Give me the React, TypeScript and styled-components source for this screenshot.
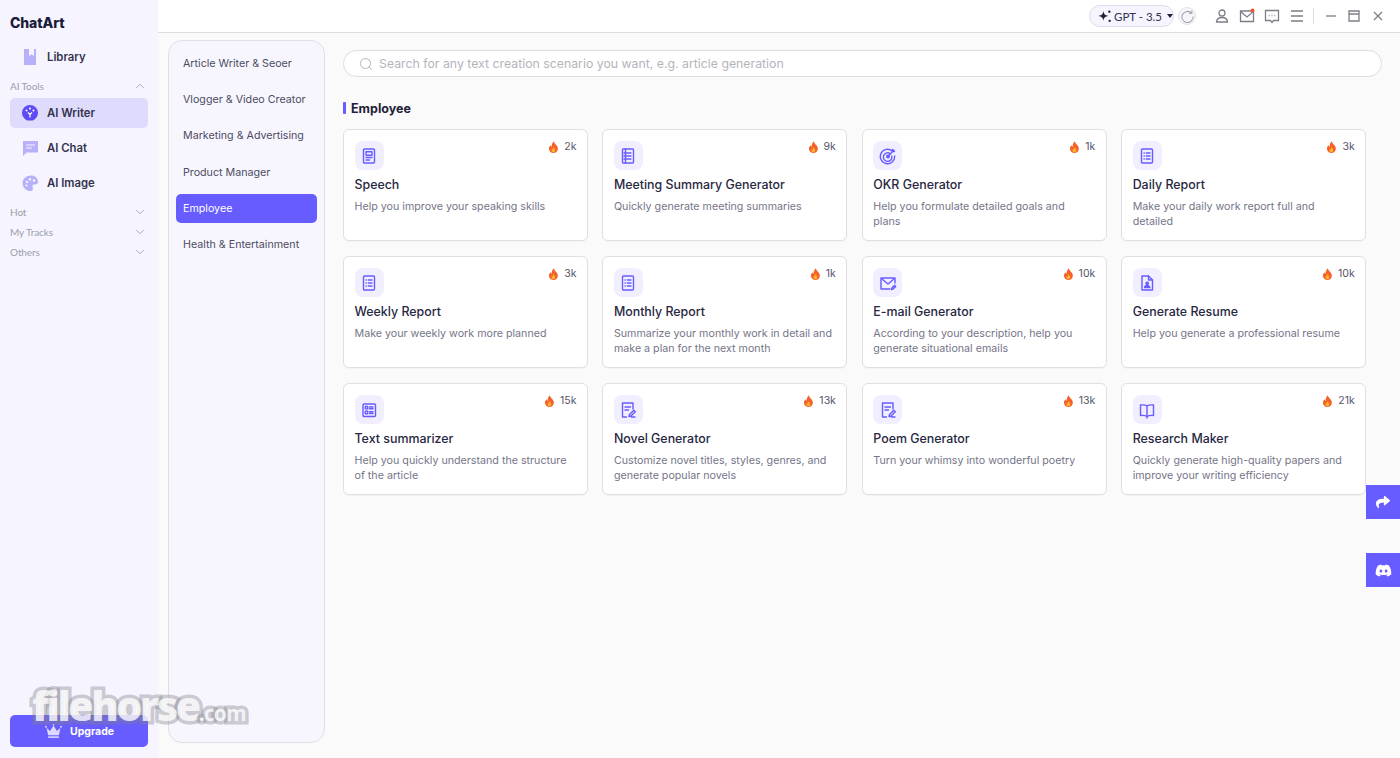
import React from "react";
import styled, { createGlobalStyle } from "styled-components";
import { FaDiscord, FaShare } from "react-icons/fa";
import { ChevronDown, ChevronUp } from "lucide-react";

const GlobalStyle = createGlobalStyle`
  html, body {
    margin: 0;
    padding: 0;
    height: 100%;
    overflow: hidden;
    font-family: Inter, "Open Sans", sans-serif;
    background: #fafafa;
  }
  * { box-sizing: border-box; }
`;

const Page = styled.div`
  position: relative;
  display: flex;
  width: 1400px;
  height: 758px;
  overflow: hidden;
`;

const Sidebar = styled.aside`
  flex: 0 0 158px;
  display: flex;
  flex-direction: column;
  padding: 14px 10px 11px;
  background: #f6f5ff;
`;

const Logo = styled.div`
  height: 17px;
  font-size: 14px;
  line-height: 17px;
  font-weight: 800;
  letter-spacing: -0.1px;
  color: #1b1b3a;
  margin-bottom: 11px;
`;

const NavRow = styled.div<{ $active?: boolean; $gap?: number }>`
  display: flex;
  align-items: center;
  gap: 8px;
  height: 30px;
  margin-bottom: ${(p) => p.$gap ?? 4}px;
  padding-left: 11px;
  border-radius: 5px;
  background: ${(p) => (p.$active ? "#dfdbfd" : "transparent")};
  font-size: 11.3px;
  font-weight: 600;
  color: #33334f;
`;

const NavIcon = styled.svg`
  width: 18px;
  height: 18px;
  flex: none;
`;

const GroupRow = styled.div<{ $gap?: number }>`
  display: flex;
  align-items: center;
  justify-content: space-between;
  height: 20px;
  padding-right: 1px;
  margin-bottom: ${(p) => p.$gap ?? 0}px;
  font-family: Lato, sans-serif;
  font-size: 10px;
  letter-spacing: -0.1px;
  color: #9d9da8;
`;

const Spacer = styled.div`
  flex: 1;
`;

const UpgradeButton = styled.div`
  display: flex;
  align-items: center;
  justify-content: center;
  gap: 7px;
  height: 32px;
  border-radius: 5px;
  background: #675cff;
  color: #fff;
  font-size: 10.5px;
  font-weight: 700;
`;

const Main = styled.div`
  flex: 1;
  display: flex;
  flex-direction: column;
  min-width: 0;
`;

const TitleBar = styled.header`
  flex: 0 0 33px;
  display: flex;
  align-items: center;
  background: #fff;
  border-bottom: 1px solid #dedee0;
  padding-left: 931px;
`;

const ModelPill = styled.div`
  display: flex;
  align-items: center;
  gap: 2px;
  width: 85px;
  height: 22px;
  padding-left: 8px;
  border: 1px solid #dddde8;
  border-radius: 11px;
  background: #f6f5ff;
  font-family: Lato, sans-serif;
  font-size: 11.5px;
  color: #33334f;
  white-space: nowrap;
`;

const Caret = styled.span`
  width: 0;
  height: 0;
  margin-left: 3px;
  border-left: 3.5px solid transparent;
  border-right: 3.5px solid transparent;
  border-top: 4px solid #22223a;
`;

const RefreshButton = styled.div`
  display: flex;
  align-items: center;
  justify-content: center;
  width: 18px;
  height: 18px;
  margin: 0 18px 0 4px;
  border: 1px solid #e2e2ea;
  border-radius: 50%;
  background: #f6f6fa;
`;

const BarIcon = styled.svg<{ $gap?: number }>`
  width: 16px;
  height: 16px;
  flex: none;
  margin-right: ${(p) => p.$gap ?? 9}px;
  fill: none;
  stroke: #7d7d88;
  stroke-width: 1.3;
`;

const BarDivider = styled.span`
  width: 1px;
  height: 16px;
  background: #dcdce0;
  margin-right: 9px;
`;

const Content = styled.div`
  flex: 1;
  display: flex;
  min-height: 0;
  padding: 7px 0 15px 10px;
`;

const CategoryPanel = styled.nav`
  flex: 0 0 157px;
  padding: 7px 7px;
  border: 1px solid #dfdfe8;
  border-radius: 14px;
  background: #f7f6ff;
`;

const CategoryItem = styled.div<{ $active?: boolean }>`
  display: flex;
  align-items: center;
  height: 29px;
  margin-bottom: 7.4px;
  padding: 1px 0 0 7px;
  border-radius: 5px;
  background: ${(p) => (p.$active ? "#675cff" : "transparent")};
  color: ${(p) => (p.$active ? "#fff" : "#4c4c60")};
  font-size: 10.7px;
  white-space: nowrap;
`;

const Workspace = styled.section`
  flex: 1;
  min-width: 0;
  padding: 10px 34px 0 18px;
`;

const SearchBox = styled.div`
  display: flex;
  align-items: center;
  gap: 6px;
  width: 1039px;
  height: 27px;
  padding-left: 15px;
  border: 1px solid #dcdce0;
  border-radius: 14px;
  background: #fff;
  font-size: 12.3px;
  color: #b4b4bc;
`;

const SectionTitle = styled.h2`
  display: flex;
  align-items: center;
  gap: 5px;
  height: 16px;
  margin: 23px 0 13px;
  font-size: 12.5px;
  font-weight: 700;
  color: #1f1f38;
  &::before {
    content: "";
    width: 3px;
    height: 12px;
    border-radius: 1px;
    background: #675cff;
  }
`;

const CardGrid = styled.div`
  display: grid;
  grid-template-columns: repeat(4, 245px);
  grid-auto-rows: 112px;
  column-gap: 14.4px;
  row-gap: 15px;
`;

const Card = styled.article`
  position: relative;
  padding: 11px 10.5px 0;
  border: 1px solid #e0e0e4;
  border-radius: 6px;
  background: #fff;
  box-shadow: 0 1px 1px rgba(0, 0, 0, 0.03);
`;

const CardTop = styled.div`
  display: flex;
  justify-content: space-between;
  align-items: flex-start;
`;

const IconTile = styled.div`
  display: flex;
  align-items: center;
  justify-content: center;
  width: 29px;
  height: 29px;
  border-radius: 8px;
  background: #f1efff;
`;

const TileIcon = styled.svg`
  width: 18px;
  height: 18px;
  fill: none;
  stroke: #675cff;
  stroke-width: 1.4;
  stroke-linecap: round;
  stroke-linejoin: round;
`;

const Heat = styled.div`
  display: flex;
  align-items: center;
  gap: 5px;
  font-size: 10.5px;
  line-height: 12px;
  color: #55556a;
`;

const CardTitle = styled.h3`
  margin: 6px 0 6px;
  font-size: 12.4px;
  line-height: 17px;
  font-weight: 500;
  color: #27273f;
`;

const CardText = styled.p`
  margin: 0;
  max-width: 220px;
  font-size: 10.7px;
  line-height: 15.3px;
  color: #757588;
`;

const FloatButton = styled.div<{ $top: number }>`
  position: absolute;
  right: 0;
  top: ${(p) => p.$top}px;
  display: flex;
  align-items: center;
  justify-content: center;
  width: 34px;
  height: 34px;
  background: #675cff;
  color: #fff;
`;

const Watermark = styled.div`
  position: absolute;
  left: 32px;
  top: 679px;
  display: flex;
  align-items: baseline;
  font-family: "Open Sans", sans-serif;
  font-weight: 800;
  color: rgba(255, 255, 255, 0.8);
  -webkit-text-stroke: 7px rgba(130, 130, 140, 0.4);
  paint-order: stroke fill;
  pointer-events: none;
`;

const WatermarkName = styled.span`
  font-size: 41px;
  line-height: 52px;
  letter-spacing: -2.4px;
`;

const WatermarkDomain = styled.span`
  font-size: 21px;
  font-weight: 700;
  letter-spacing: -0.8px;
`;

const Flame = () => (
  <svg width="11" height="12" viewBox="0 0 11 12">
    <path
      d="M5.8.2c.4 1.8 1.4 2.6 2.4 3.8 1.2 1.4 1.8 2.6 1.6 4.2C9.5 10.4 7.8 12 5.5 12S1.3 10.5 1 8.3C.8 6.7 1.500 5.400 2.600 4.300c.1.8.4 1.400 1 1.800C3.400 4 4.300 1.700 5.800.2z"
      fill="#f4622a"
    />
    <path
      d="M5.600 6c.2 1 .8 1.400 1.200 2 .5.8.5 1.700 0 2.400-.4.5-1 .8-1.500.8-.7 0-1.400-.4-1.700-1.100-.3-.8-.1-1.600.4-2.200.2.3.4.5.7.6C4.600 7.600 5 6.700 5.600 6z"
      fill="#ffb52e"
    />
  </svg>
);

const icons: Record<string, React.ReactNode> = {
  speech: (
    <>
      <rect x="3.5" y="2" width="11" height="14" rx="1" />
      <rect x="6" y="4.7" width="6" height="3.6" />
      <path d="M6 10.500h6M6 13h3.500" />
    </>
  ),
  meeting: (
    <>
      <rect x="3.5" y="2" width="11" height="14" rx="1" />
      <path d="M6.500 2v14M8.500 6h3.500M8.500 9h3.500M8.500 12h3.500M5 6h3M5 9h3M5 12h3" />
    </>
  ),
  target: (
    <>
      <path d="M13.500 4.300A7.200 7.200 0 1 0 15.700 9" />
      <path d="M11 6.500a4.300 4.300 0 1 0 1.800 2.500" />
      <circle cx="9" cy="9.5" r="1.3" />
      <path d="M9 9.500l6-6.500M13.500 2.500v2h2" />
    </>
  ),
  list: (
    <>
      <rect x="3.5" y="2" width="11" height="14" rx="1" />
      <path d="M6 6h.3M6 9h.3M6 12h.3M8.300 6H12M8.300 9H12M8.300 12H12" />
    </>
  ),
  mail: (
    <>
      <path d="M16 9V4H2v11h9" />
      <path d="M2.500 4.500L9 10l6.500-5.500" />
      <path d="M12.500 15.500l.4-1.600 2.600-2.600 1.200 1.200-2.600 2.600z" />
    </>
  ),
  resume: (
    <>
      <path d="M4 2h6.500L14.500 6v10H4z" />
      <path d="M10.500 2v4h4" />
      <circle cx="9.2" cy="9.3" r="1.2" fill="#675cff" />
      <path d="M6.500 13.500c.3-1.500 1.300-2 2.700-2s2.400.5 2.700 2z" fill="#675cff" />
    </>
  ),
  summary: (
    <>
      <rect x="3" y="3" width="12.5" height="12.5" rx="1" />
      <rect x="5.3" y="5.5" width="2.4" height="2.4" />
      <rect x="5.3" y="10.3" width="2.4" height="2.4" />
      <path d="M9.500 6h3.500M9.500 7.800h3.500M9.500 10.800h3.500M9.500 12.500h3.500" />
    </>
  ),
  edit: (
    <>
      <path d="M7.500 16H3.500V2h10.500v6" />
      <path d="M6 6h5.500M6 9h3.500" />
      <path d="M10 15.500l.5-2 4.300-4.300 1.500 1.500-4.300 4.300zM12.500 16h3.500" />
    </>
  ),
  book: (
    <>
      <path d="M9 5c-1.500-1-4-1.300-6.500-1v10.500c2.500-.3 5 0 6.500 1 1.500-1 4-1.300 6.500-1V4C13 3.700 10.500 4 9 5z" />
      <path d="M9 5v12" />
    </>
  ),
};

const categories = [
  "Article Writer & Seoer",
  "Vlogger & Video Creator",
  "Marketing & Advertising",
  "Product Manager",
  "Employee",
  "Health & Entertainment",
];

const cards = [
  { icon: "speech", heat: "2k", title: "Speech", text: "Help you improve your speaking skills" },
  { icon: "meeting", heat: "9k", title: "Meeting Summary Generator", text: "Quickly generate meeting summaries" },
  { icon: "target", heat: "1k", title: "OKR Generator", text: "Help you formulate detailed goals and plans" },
  { icon: "list", heat: "3k", title: "Daily Report", text: "Make your daily work report full and detailed" },
  { icon: "list", heat: "3k", title: "Weekly Report", text: "Make your weekly work more planned" },
  { icon: "list", heat: "1k", title: "Monthly Report", text: "Summarize your monthly work in detail and make a plan for the next month" },
  { icon: "mail", heat: "10k", title: "E-mail Generator", text: "According to your description, help you generate situational emails" },
  { icon: "resume", heat: "10k", title: "Generate Resume", text: "Help you generate a professional resume" },
  { icon: "summary", heat: "15k", title: "Text summarizer", text: "Help you quickly understand the structure of the article" },
  { icon: "edit", heat: "13k", title: "Novel Generator", text: "Customize novel titles, styles, genres, and generate popular novels" },
  { icon: "edit", heat: "13k", title: "Poem Generator", text: "Turn your whimsy into wonderful poetry" },
  { icon: "book", heat: "21k", title: "Research Maker", text: "Quickly generate high-quality papers and improve your writing efficiency" },
];

const App: React.FC = () => {
  return (
    <Page>
      <GlobalStyle />
      <Sidebar>
        <Logo>ChatArt</Logo>
        <NavRow>
          <NavIcon viewBox="0 0 18 18">
            <path d="M3 1h12v16H3z" fill="#b8b0fb" />
            <path d="M8 1h5v7l-2.500-1.800L8 8z" fill="#f6f5ff" />
          </NavIcon>
          Library
        </NavRow>
        <GroupRow $gap={2}>
          AI Tools
          <ChevronUp size={14} strokeWidth={1.2} color="#8a8a96" />
        </GroupRow>
        <NavRow $active $gap={5}>
          <NavIcon viewBox="0 0 18 18">
            <path d="M9 1a8 8 0 0 1 8 8c0 3-1.800 5-3.500 6.500-.6.6-1.300 1-2 1H6.500c-.7 0-1.400-.4-2-1C2.800 14 1 12 1 9a8 8 0 0 1 8-8z" fill="#5f4bf5" />
            <circle cx="5.5" cy="6.5" r="1" fill="#fff" />
            <circle cx="12.5" cy="6.5" r="1" fill="#fff" />
            <circle cx="9" cy="4.5" r="1" fill="#fff" />
            <path d="M7 8.500l2 2 2-2M9 10.500v3" stroke="#fff" strokeWidth="1.2" fill="none" />
          </NavIcon>
          AI Writer
        </NavRow>
        <NavRow $gap={5}>
          <NavIcon viewBox="0 0 18 18">
            <path d="M2 2h15v11.500H5.500L2 17z" fill="#b8b0fb" />
            <path d="M5 6h9M5 9h6" stroke="#f6f5ff" strokeWidth="1.2" />
          </NavIcon>
          AI Chat
        </NavRow>
        <NavRow>
          <NavIcon viewBox="0 0 18 18">
            <path d="M10 1.500c4 0 7 2.700 7 6.300 0 2.500-2 2.700-3.500 2.700-1.300 0-2 .6-2 1.700 0 1 .4 1.400.4 2.500 0 1.400-1 2.300-2.400 2.300-4.300 0-8-3.500-8-7.800S5.500 1.500 10 1.500z" fill="#b8b0fb" />
            <circle cx="6" cy="8" r="1.2" fill="#f6f5ff" />
            <circle cx="9" cy="5.2" r="1.2" fill="#f6f5ff" />
            <circle cx="13" cy="6.5" r="1.2" fill="#f6f5ff" />
            <circle cx="5.5" cy="11.5" r="1" fill="#f6f5ff" />
          </NavIcon>
          AI Image
        </NavRow>
        <GroupRow>
          Hot
          <ChevronDown size={14} strokeWidth={1.2} color="#8a8a96" />
        </GroupRow>
        <GroupRow>
          My Tracks
          <ChevronDown size={14} strokeWidth={1.2} color="#8a8a96" />
        </GroupRow>
        <GroupRow>
          Others
          <ChevronDown size={14} strokeWidth={1.2} color="#8a8a96" />
        </GroupRow>
        <Spacer />
        <UpgradeButton>
          <svg width="19" height="15" viewBox="0 0 17 14">
            <path d="M2 3.500l3.300 3 3.200-5 3.200 5 3.300-3L13.500 10.500h-10z" fill="#dcd8ff" />
            <path d="M3.500 11.500h10V13h-10z" fill="#dcd8ff" />
            <circle cx="1.5" cy="2.5" r=".9" fill="#dcd8ff" />
            <circle cx="15.5" cy="2.5" r=".9" fill="#dcd8ff" />
            <circle cx="8.5" cy=".8" r=".8" fill="#dcd8ff" />
          </svg>
          Upgrade
        </UpgradeButton>
      </Sidebar>
      <Main>
        <TitleBar>
          <ModelPill>
            <svg width="15" height="15" viewBox="0 0 13 13">
              <path d="M5 1.500c.5 3 1.500 4 4.500 4.500-3 .5-4 1.500-4.500 4.500-.5-3-1.500-4-4.500-4.500 3-.5 4-1.500 4.500-4.500z" fill="#22223a" />
              <circle cx="10.5" cy="2" r="1.1" fill="#22223a" />
              <circle cx="10.8" cy="10.5" r="1.1" fill="#22223a" />
            </svg>
            GPT - 3.5
            <Caret />
          </ModelPill>
          <RefreshButton>
            <svg width="13" height="13" viewBox="0 0 14 14" fill="none" stroke="#a0a0ac" strokeWidth="1.1">
              <path d="M11.500 3.500A6 6 0 1 0 13 7" />
              <path d="M8.500 3.500h3.200V.5" />
            </svg>
          </RefreshButton>
          <BarIcon viewBox="0 0 16 16">
            <circle cx="8" cy="5" r="3" />
            <path d="M2.500 14c.3-3 2.200-4.500 5.500-4.500s5.200 1.500 5.500 4.500z" />
          </BarIcon>
          <BarIcon viewBox="0 0 16 16">
            <path d="M1.500 3h13v10.500h-13z" />
            <path d="M1.500 3.500L8 9l6.500-5.500" />
            <circle cx="13.5" cy="2.5" r="2" fill="#f4522a" stroke="none" />
          </BarIcon>
          <BarIcon viewBox="0 0 16 16">
            <path d="M1.500 2.500h13v10H9.500L8 14.500 6.500 12.500h-5z" />
            <path d="M4.800 7.500h.8M7.600 7.500h.8M10.400 7.500h.8" />
          </BarIcon>
          <BarIcon viewBox="0 0 16 16" $gap={8}>
            <path d="M2 3h12M2 8h12M2 13h12" />
          </BarIcon>
          <BarDivider />
          <BarIcon viewBox="0 0 16 16" $gap={7}>
            <path d="M3 8h10" />
          </BarIcon>
          <BarIcon viewBox="0 0 16 16" $gap={8}>
            <path d="M3 3h10v10H3zM3 6h10" />
          </BarIcon>
          <BarIcon viewBox="0 0 16 16" $gap={0}>
            <path d="M4 4l8 8M12 4l-8 8" />
          </BarIcon>
        </TitleBar>
        <Content>
          <CategoryPanel>
            {categories.map((name) => (
              <CategoryItem key={name} $active={name === "Employee"}>
                {name}
              </CategoryItem>
            ))}
          </CategoryPanel>
          <Workspace>
            <SearchBox>
              <svg width="14" height="14" viewBox="0 0 14 14" fill="none" stroke="#b4b4bc" strokeWidth="1">
                <circle cx="6.5" cy="6.5" r="5" />
                <path d="M10.200 10.200L12.500 12.500" />
              </svg>
              Search for any text creation scenario you want, e.g. article generation
            </SearchBox>
            <SectionTitle>Employee</SectionTitle>
            <CardGrid>
              {cards.map((card) => (
                <Card key={card.title}>
                  <CardTop>
                    <IconTile>
                      <TileIcon viewBox="0 0 18 18">{icons[card.icon]}</TileIcon>
                    </IconTile>
                    <Heat>
                      <Flame />
                      {card.heat}
                    </Heat>
                  </CardTop>
                  <CardTitle>{card.title}</CardTitle>
                  <CardText>{card.text}</CardText>
                </Card>
              ))}
            </CardGrid>
          </Workspace>
        </Content>
      </Main>
      <FloatButton $top={485}>
        <FaShare size={14} />
      </FloatButton>
      <FloatButton $top={553}>
        <FaDiscord size={17} />
      </FloatButton>
      <Watermark>
        <WatermarkName>filehorse</WatermarkName>
        <WatermarkDomain>.com</WatermarkDomain>
      </Watermark>
    </Page>
  );
};

export default App;
